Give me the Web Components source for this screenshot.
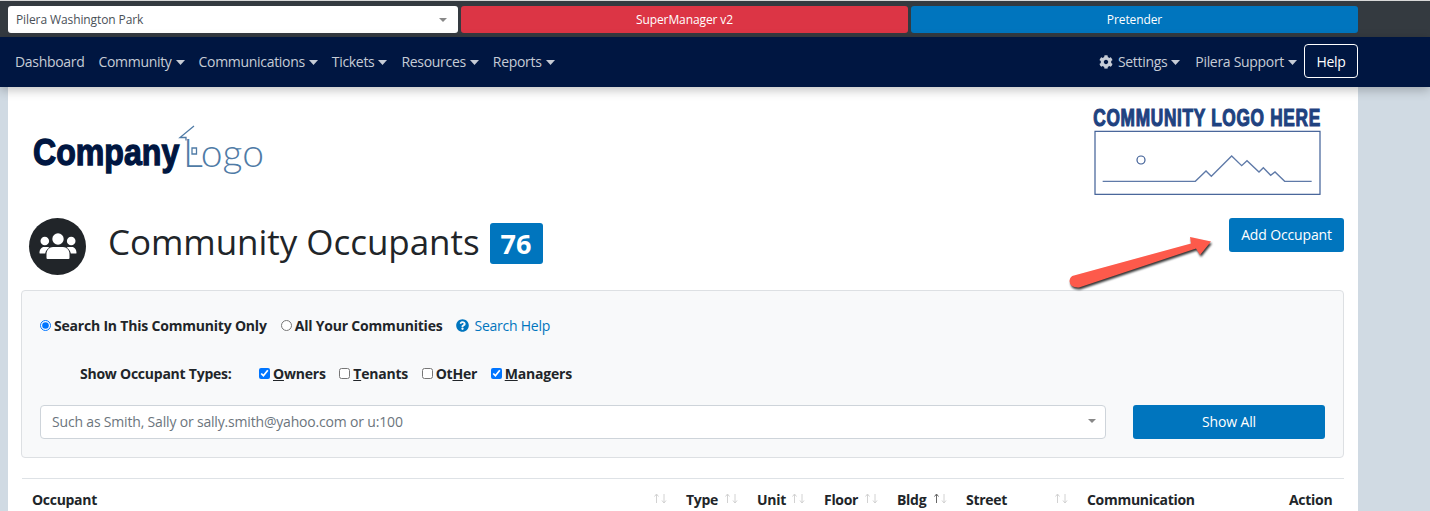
<!DOCTYPE html>
<html>
<head>
<meta charset="utf-8">
<title>Community Occupants</title>
<style>
  html, body { margin: 0; height: 511px; overflow: hidden; }
  body { background: #d0dae3; font-family: "Open Sans", "Liberation Sans", sans-serif; color: #212529; }
</style>
</head>
<body>
<app-topbar></app-topbar>
<app-navbar></app-navbar>
<app-page></app-page>

<script>
function makeEl(name, html) {
  class El extends HTMLElement {
    constructor() {
      super();
      this.attachShadow({mode: 'open'});
      this.shadowRoot.innerHTML = typeof html === 'function' ? html(this) : html;
    }
  }
  customElements.define(name, El);
}

const CARET = `<svg width="9" height="5" viewBox="0 0 9 5" style="margin-left:4px;vertical-align:2px"><path d="M0 0h9L4.500 5z" fill="currentColor"/></svg>`;
const COG = 'M487.4 315.7l-42.6-24.6c4.3-23.2 4.3-47 0-70.2l42.6-24.6c4.9-2.8 7.1-8.6 5.5-14-11.1-35.6-30-67.8-54.7-94.6-3.8-4.1-10-5.1-14.8-2.3L380.8 110c-17.9-15.4-38.5-27.3-60.8-35.1V25.8c0-5.6-3.9-10.5-9.4-11.7-36.7-8.2-74.3-7.8-109.2 0-5.5 1.2-9.4 6.1-9.4 11.7V75c-22.2 7.9-42.8 19.8-60.8 35.1L88.7 85.5c-4.9-2.8-11-1.9-14.8 2.3-24.7 26.7-43.6 58.9-54.7 94.6-1.7 5.4.6 11.2 5.5 14L67.3 221c-4.3 23.2-4.3 47 0 70.2l-42.6 24.6c-4.9 2.8-7.1 8.6-5.5 14 11.1 35.6 30 67.8 54.7 94.6 3.8 4.1 10 5.1 14.8 2.3l42.6-24.6c17.9 15.4 38.5 27.3 60.8 35.1v49.2c0 5.6 3.9 10.5 9.4 11.7 36.7 8.2 74.3 7.8 109.2 0 5.5-1.2 9.4-6.1 9.4-11.7v-49.2c22.2-7.9 42.8-19.8 60.8-35.1l42.6 24.6c4.9 2.8 11 1.9 14.8-2.3 24.7-26.7 43.6-58.9 54.7-94.6 1.5-5.5-.7-11.3-5.6-14.1zM256 336c-44.1 0-80-35.9-80-80s35.900-80 80-80 80 35.900 80 80-35.900 80-80 80z';
const HELP = 'M504 256c0 136.997-111.043 248-248 248S8 392.997 8 256C8 119.083 119.043 8 256 8s248 111.083 248 248zM262.655 90c-54.497 0-89.255 22.957-116.549 63.758-3.536 5.286-2.353 12.415 2.715 16.258l34.699 26.31c5.205 3.947 12.621 3.008 16.665-2.122 17.864-22.658 30.113-35.797 57.303-35.797 20.429 0 45.698 13.148 45.698 32.958 0 14.976-12.363 22.667-32.534 33.976C247.128 238.528 216 254.941 216 296v4c0 6.627 5.373 12 12 12h56c6.627 0 12-5.373 12-12v-1.333c0-28.462 83.186-29.647 83.186-106.667 0-58.002-60.165-102-116.531-102zM256 338c-25.365 0-46 20.635-46 46 0 25.364 20.635 46 46 46s46-20.636 46-46c0-25.365-20.635-46-46-46z';

makeEl('app-topbar', `
  <style>
    :host { display: block; box-sizing: border-box; height: 37px; background: #343a40; border-top: 1px solid #d8d8d8; padding: 5px 72px 4px 8px; }
    .row { display: grid; grid-template-columns: 450px 447px 447px; gap: 3px; height: 27px; font-size: 12px; }
    .sel { background: #fff; border-radius: 3px; display: flex; align-items: center; justify-content: space-between; padding: 0 11px 0 8px; color: #495057; letter-spacing: -.1px; }
    .sel i { border: 4px solid transparent; border-top: 4px solid #888; border-bottom: 0; }
    .btn { border-radius: 3px; color: #fff; display: flex; align-items: center; justify-content: center; letter-spacing: -.1px; }
    .red { background: #dc3545; } .blue { background: #0075be; }
  </style>
  <div class="row">
    <div class="sel"><span>Pilera Washington Park</span><i></i></div>
    <div class="btn red">SuperManager v2</div>
    <div class="btn blue">Pretender</div>
  </div>`);

makeEl('app-navbar', `
  <style>
    :host { display: block; position: relative; z-index: 2; box-sizing: border-box; height: 50px; background: #001641; box-shadow: 0 3px 10px rgba(0,0,0,.25); padding: 7px 72px 0 0; font-size: 14px; letter-spacing: -.31px; color: #c6ccd6; }
    nav { display: flex; align-items: center; height: 34px; padding-left: 8px; }
    a { padding: 0 7px; white-space: nowrap; }
    .gap { flex: 1; }
    .settings { margin-right: 1px; }
    .help { box-sizing: border-box; width: 54px; height: 34px; border: 1px solid #fff; border-radius: 4px; color: #fff; display: flex; align-items: center; justify-content: center; }
    svg.cog { width: 14px; height: 14px; vertical-align: -2px; margin-right: 5px; }
  </style>
  <nav>
    <a>Dashboard</a><a>Community${CARET}</a><a>Communications${CARET}</a><a>Tickets${CARET}</a><a>Resources${CARET}</a><a>Reports${CARET}</a>
    <span class="gap"></span>
    <a class="settings"><svg class="cog" viewBox="0 0 512 512"><path fill="currentColor" d="${COG}"/></svg>Settings${CARET}</a><a>Pilera Support${CARET}</a>
    <div class="help">Help</div>
  </nav>`);

makeEl('page-logos', `
  <style>
    :host { display: flex; justify-content: space-between; height: 131px; box-sizing: border-box; padding: 33px 36px 0 22px; }
    svg { display: block; }
    .co { font-family: "Liberation Sans", sans-serif; font-weight: 700; font-size: 37px; fill: #001641; stroke: #001641; stroke-width: 1.300px; }
    .lo { font-family: Lato, "Open Sans", sans-serif; font-weight: 300; font-size: 39px; fill: #4f7ba6; }
    .cm { font-family: "Liberation Sans", sans-serif; font-weight: 700; font-size: 70px; letter-spacing: 2.800px; fill: #1f4280; stroke: #1f4280; stroke-width: 3.500px; }
  </style>
  <svg width="240" height="60" viewBox="30 120 240 60">
    <text class="co" transform="translate(33 165) scale(.868 1)">Company</text>
    <text class="lo" x="183" y="167" textLength="81" lengthAdjust="spacingAndGlyphs">Logo</text>
    <path d="M194 126L180 137.500h6v3M192 148h4.500v6H192z" fill="none" stroke="#4f7ba6" stroke-width="1.300"/>
  </svg>
  <svg width="230" height="94" viewBox="126 24 690 282" style="margin-top:-17px">
    <text class="cm" transform="translate(130 92) scale(.74 1)">COMMUNITY LOGO HERE</text>
    <rect x="135" y="109" width="675" height="189" fill="none" stroke="#3a5a93" stroke-width="3.500"/>
    <circle cx="273" cy="195" r="12" fill="none" stroke="#3a5a93" stroke-width="3.500"/>
    <polyline points="158,259 436,259 468,228 484,244 545,183 575,212 591,197 627,231 640,218 662,241 675,231 704,259 785,259" fill="none" stroke="#5f7aa8" stroke-width="4"/>
  </svg>`);

makeEl('page-heading', `
  <style>
    :host { display: flex; align-items: flex-start; height: 72px; padding: 0 14px 0 21px; }
    .circle { width: 57px; height: 57px; border-radius: 50%; background: #212529; display: flex; align-items: center; justify-content: center; flex: none; }
    h1 { margin: 0 0 0 22px; font-weight: 400; font-size: 35px; line-height: 48px; white-space: nowrap; letter-spacing: -.05px; }
    .badge { margin: 5px 0 0 10px; width: 53px; height: 41px; flex: none; background: #0075be; color: #fff; font-weight: 700; font-size: 27px; border-radius: 3px; display: flex; align-items: center; justify-content: center; }
    .add { margin-left: auto; }
  </style>
  <div class="circle">
    <svg width="38" height="27" viewBox="0 0 38 27" fill="#fff">
      <circle cx="19" cy="6" r="5.700"/><circle cx="5.800" cy="8" r="4.300"/><circle cx="32.200" cy="8" r="4.300"/>
      <path d="M7.500 25v-4c0-4 3-7 6.500-7h10c3.500 0 6.500 3 6.500 7v4q0 1-1 1H8.500q-1 0-1-1z"/>
      <path d="M.5 20c0-3.500 2-6 4.500-6h3.500c.8 0 1.500.3 2 .7C8 16 6.600 18 6.200 20.500H1.500Q.5 20.500.5 20zM37.500 20c0-3.500-2-6-4.500-6h-3.500c-.8 0-1.500.3-2 .7 2.500 1.300 3.900 3.300 4.300 5.800h4.700Q37.500 20.500 37.500 20z"/>
    </svg>
  </div>
  <h1>Community Occupants</h1>
  <div class="badge">76</div>
  <app-button class="add" style="--w:115px;--h:34px">Add Occupant</app-button>`);

makeEl('app-button', `
  <style>
    :host { display: inline-flex; box-sizing: border-box; width: var(--w); height: var(--h); padding-bottom: 2px; background: #0075be; color: #fff; border-radius: 3px; align-items: center; justify-content: center; font-size: 14px; letter-spacing: -.15px; }
  </style>
  <slot></slot>`);

makeEl('check-option', (el) => `
  <style>
    :host { display: inline-flex; align-items: center; font-weight: 700; font-size: 14px; letter-spacing: -.2px; white-space: nowrap; }
    input { margin: 0 3px 0 0; width: 11px; height: 11px; }
    u { text-decoration-thickness: 1.500px; }
  </style>
  <input type="${el.getAttribute('kind') || 'checkbox'}" name="scope" ${el.hasAttribute('on') ? 'checked' : ''}><slot></slot>`);

makeEl('search-card', `
  <style>
    :host { display: block; box-sizing: border-box; height: 168px; margin: 0 14px 0 13px; padding: 0 18px; background: #f8f9fa; border: 1px solid #dde0e3; border-radius: 4px; font-size: 14px; }
    .r1 { display: flex; align-items: center; height: 20px; padding-top: 24px; }
    .r2 { display: flex; align-items: center; height: 20px; margin-top: 28px; padding-left: 40px; }
    .r2 b { letter-spacing: -.24px; }
    .r2 check-option { margin-right: 13.500px; }
    .link { color: #0075be; display: inline-flex; align-items: center; gap: 5px; letter-spacing: -.25px; margin-left: 14px; }
    .r3 { display: flex; gap: 27px; margin-top: 22px; }
    .input { box-sizing: border-box; flex: 1; height: 34px; padding: 0 9px 2px 11px; background: #fff; border: 1px solid #ced4da; border-radius: 4px; display: flex; align-items: center; justify-content: space-between; color: #6c757d; letter-spacing: -.18px; }
    .input i { border: 4px solid transparent; border-top: 4px solid #888; border-bottom: 0; }
  </style>
  <div class="r1">
    <check-option kind="radio" on>Search In This Community Only</check-option>
    <check-option kind="radio" style="margin-left:14px">All Your Communities</check-option>
    <span class="link"><svg width="13" height="13" viewBox="0 0 512 512"><path fill="currentColor" d="${HELP}"/></svg>Search Help</span>
  </div>
  <div class="r2">
    <b style="width:179px">Show Occupant Types:</b>
    <check-option on><span><u>O</u>wners</span></check-option>
    <check-option><span><u>T</u>enants</span></check-option>
    <check-option><span>Ot<u>H</u>er</span></check-option>
    <check-option on><span><u>M</u>anagers</span></check-option>
  </div>
  <div class="r3">
    <div class="input"><span>Such as Smith, Sally or sally.smith@yahoo.com or u:100</span><i></i></div>
    <app-button style="--w:192px;--h:34px">Show All</app-button>
  </div>`);

makeEl('sort-head', (el) => `
  <style>
    :host { display: flex; justify-content: space-between; align-items: flex-start; padding: 0 9px 0 10px; font-weight: 700; font-size: 14px; letter-spacing: -.3px; white-space: nowrap; }
    svg { margin-top: 3px; flex: none; }
  </style>
  <span><slot></slot></span>
  ${el.hasAttribute('plain') ? '' : `<svg width="13" height="11" viewBox="0 0 13 11" fill="none" stroke-width="1">
    <path d="M2.500 10V1M.5 3.500l2-2.500 2 2.500" stroke="${el.hasAttribute('up') ? '#666' : '#d2d2d2'}"/>
    <path d="M10 1v9M8 7.500l2 2.500 2-2.500" stroke="#d2d2d2"/>
  </svg>`}`);

makeEl('occupant-table', `
  <style>
    :host { display: grid; grid-template-columns: 654px 71px 67px 73px 69px 121px 202px 65px; margin: 20px 14px 0 14px; padding-top: 11px; border-top: 1px solid #dee2e6; }
  </style>
  <sort-head>Occupant</sort-head><sort-head>Type</sort-head><sort-head>Unit</sort-head><sort-head>Floor</sort-head>
  <sort-head up>Bldg</sort-head><sort-head>Street</sort-head><sort-head plain>Communication</sort-head><sort-head plain>Action</sort-head>`);

makeEl('app-page', `
  <style>
    :host { display: block; position: relative; margin: 0 72px 0 8px; height: 424px; background: #fff; }
    .arrow { position: absolute; left: 1047px; top: 142px; overflow: visible; filter: drop-shadow(1.500px 2px 1.200px rgba(0,0,0,.8)); }
  </style>
  <page-logos></page-logos>
  <page-heading></page-heading>
  <search-card></search-card>
  <occupant-table></occupant-table>
  <svg class="arrow" width="170" height="70" viewBox="1055 229 170 70">
    <path d="M1074 275.500L1191 243.500 1190 237 1211 241.500 1200 255 1196 248.500 1079 287.500Q1070 288 1069.500 281 1070 276 1074 275.500z" fill="#fd5a4b"/>
  </svg>`);
</script>
</body>
</html>
